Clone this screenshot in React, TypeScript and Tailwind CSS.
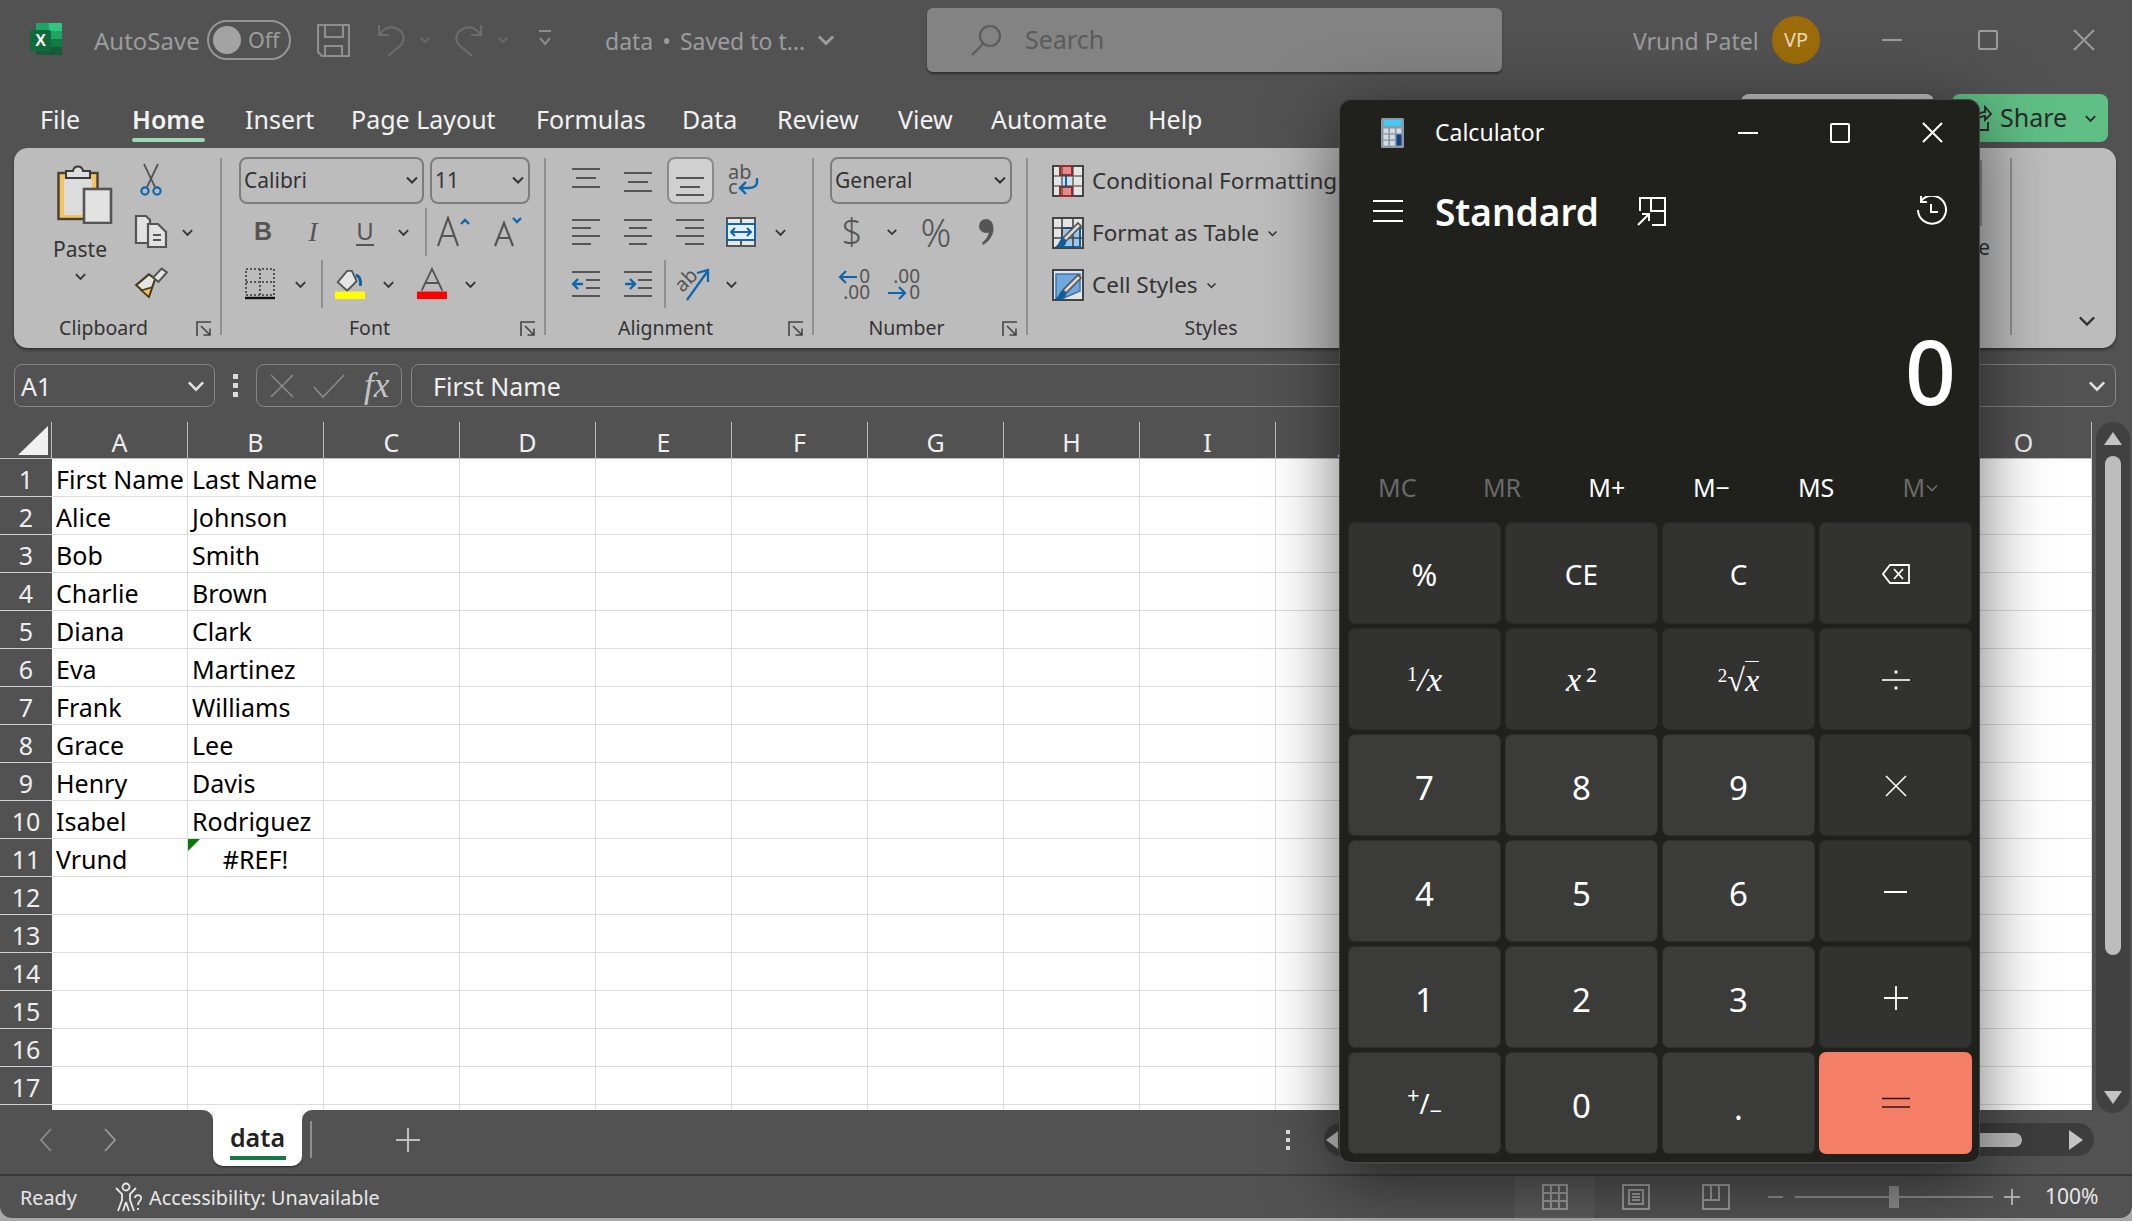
import React from "react";

const Chev = ({ s = 14, c = "#333", w = 2 }: { s?: number; c?: string; w?: number }) => (
  <svg width={s} height={s} viewBox="0 0 14 14" fill="none" stroke={c} strokeWidth={w}>
    <path d="M2 4.5 L7 9.5 L12 4.5" />
  </svg>
);

const Cell = ({ w, children, className = "" }: { w: number; children?: React.ReactNode; className?: string }) => (
  <div className={"flex items-center justify-center shrink-0 h-full " + className} style={{ width: w }}>
    {children}
  </div>
);

const VBar = ({ h = 48 }: { h?: number }) => <div className="w-[2px] bg-[#8f8f8f] shrink-0" style={{ height: h }} />;

const Launcher = () => (
  <svg width="16" height="16" viewBox="0 0 16 16" fill="none" stroke="#444" strokeWidth="1.6">
    <path d="M15 1H1V15" />
    <path d="M5 5L14 14M14 7.5V14H7.5" />
  </svg>
);

const Lines = ({ rows, w = 28, h = 20, c = "#555" }: { rows: number[][]; w?: number; h?: number; c?: string }) => (
  <svg width={w} height={h} viewBox={`0 0 ${w} ${h}`} stroke={c} strokeWidth="2.2">
    {rows.map((r, i) => (
      <line key={i} x1={r[0]} x2={r[1]} y1={r[2]} y2={r[2]} />
    ))}
  </svg>
);

const Select = ({ text, w }: { text: string; w: number }) => (
  <div
    className="h-[47px] rounded-[8px] border-2 border-[#7d7d7d] flex items-center justify-between pl-[3px] pr-[3px] text-[21px] text-[#333] shrink-0"
    style={{ width: w }}
  >
    <span className="pt-[2px]">{text}</span>
    <Chev s={14} c="#333" />
  </div>
);

const Group = ({
  w,
  label,
  launcher,
  children,
}: {
  w: number;
  label: string;
  launcher?: boolean;
  children: React.ReactNode;
}) => (
  <div className="shrink-0 flex flex-col h-full" style={{ width: w }}>
    <div className="h-[166px] pt-[6px] overflow-hidden">{children}</div>
    <div className={"h-[28px] flex items-center relative " + (launcher ? "pr-[27px]" : "")}>
      <div className="w-full text-center text-[19.5px] text-[#333] leading-none">{label}</div>
      {launcher && (
        <div className="absolute right-[8px] top-[7px]">
          <Launcher />
        </div>
      )}
    </div>
  </div>
);

const Row = ({ children, pl = 0 }: { children: React.ReactNode; pl?: number }) => (
  <div className="h-[52px] flex items-center" style={{ paddingLeft: pl }}>
    {children}
  </div>
);

const Divider = () => <div className="w-[2px] h-[177px] mt-[10px] bg-[#8f8f8f] shrink-0" />;

const PasteIcon = () => (
  <svg width="56" height="60" viewBox="0 0 56 60">
    <rect x="1.5" y="9" width="39" height="46" fill="#f2c468" stroke="#4a3f2a" strokeWidth="2.4" />
    <rect x="7" y="15" width="28" height="36" fill="#dcdcdc" />
    <path d="M9 14V7H16C17 1 25 1 26 7H33V14Z" fill="#dedede" stroke="#3a3a3a" strokeWidth="2" />
    <rect x="27" y="25" width="27" height="34" fill="#e2e2e2" stroke="#555" strokeWidth="2.6" />
  </svg>
);
const CutIcon = () => (
  <svg width="22" height="34" viewBox="0 0 22 34" fill="none">
    <path d="M4 1L15 24M18 1L7 24" stroke="#555" strokeWidth="1.8" />
    <circle cx="5" cy="28" r="3.6" stroke="#0f66ad" strokeWidth="2.2" />
    <circle cx="17" cy="28" r="3.6" stroke="#0f66ad" strokeWidth="2.2" />
  </svg>
);
const CopyIcon = () => (
  <svg width="34" height="34" viewBox="0 0 34 34" fill="#e2e2e2" stroke="#555" strokeWidth="2.2">
    <path d="M2 1H12L16 5V28H2Z" />
    <path d="M14 9H24L32 17V32H14Z" />
    <path d="M19 20H27M19 25H27" />
  </svg>
);
const PainterIcon = () => (
  <svg width="34" height="34" viewBox="0 0 32 32">
    <path d="M2 17L14 28L20 11L14 7Z" fill="#e5e5e5" stroke="#4a3a1a" strokeWidth="2" />
    <path d="M7 22L14 28L17 19Z" fill="#f0c060" stroke="#4a3a1a" strokeWidth="1.5" />
    <path d="M18 10L26 1.5L31 5L23 14Z" fill="#e5e5e5" stroke="#555" strokeWidth="2" />
  </svg>
);
const BorderIcon = () => (
  <svg width="30" height="32" viewBox="0 0 30 32" fill="none" stroke="#555" strokeWidth="2" strokeDasharray="2 2">
    <rect x="1" y="1" width="28" height="26" />
    <path d="M15 1V27M1 14H29" />
    <path d="M0 30H30" stroke="#111" strokeDasharray="none" strokeWidth="2.4" />
  </svg>
);
const FillIcon = () => (
  <svg width="34" height="34" viewBox="0 0 34 34">
    <path d="M4 15L14 3L19 3L24 14L14 24Z" fill="#e5e5e5" stroke="#555" strokeWidth="2" />
    <path d="M23 8C27 8 29 13 28 19" fill="none" stroke="#0f5f9f" strokeWidth="3" />
    <rect x="1" y="25" width="32" height="8" fill="#ffff00" />
  </svg>
);
const ColorA = () => (
  <svg width="34" height="34" viewBox="0 0 34 34">
    <path d="M6 24L17 1L28 24M10 16H24" fill="none" stroke="#555" strokeWidth="2" />
    <rect x="1" y="25" width="32" height="8" fill="#ff0000" />
  </svg>
);
const FontUp = ({ d }: { d: boolean }) => (
  <svg width={d ? 30 : 34} height="32" viewBox={d ? "0 0 30 32" : "0 0 34 32"} fill="none">
    {d ? (
      <>
        <path d="M2 30L11 7L20 30M6 22H16" stroke="#555" strokeWidth="2.2" />
        <path d="M20 2L24 6L28 2" stroke="#0f66ad" strokeWidth="2.4" />
      </>
    ) : (
      <>
        <path d="M2 30L12 2L22 30M6 20H18" stroke="#555" strokeWidth="2.2" />
        <path d="M25 8L29 4L33 8" stroke="#0f66ad" strokeWidth="2.4" />
      </>
    )}
  </svg>
);
const WrapIcon = () => (
  <div className="relative w-[32px] h-[32px] text-[#555] text-[20px] leading-[15px]">
    <div>ab</div>
    <div>c</div>
    <svg className="absolute left-[10px] top-[14px]" width="22" height="18" viewBox="0 0 22 18" fill="none" stroke="#0f66ad" strokeWidth="2.4">
      <path d="M19 0V4C19 8 15 10 11 10H3M8 4L2 10L8 16" />
    </svg>
  </div>
);
const MergeIcon = () => (
  <svg width="30" height="30" viewBox="0 0 30 30" fill="none">
    <rect x="1" y="1" width="28" height="28" fill="#e7e7e7" stroke="#555" strokeWidth="2" />
    <path d="M15 1V7M15 23V29" stroke="#555" strokeWidth="2" />
    <rect x="1" y="7" width="28" height="16" fill="#e7f0f8" stroke="#0f66ad" strokeWidth="2" />
    <path d="M5 15H25M9 11L5 15L9 19M21 11L25 15L21 19" stroke="#0f66ad" strokeWidth="2" />
  </svg>
);
const IndentIcon = ({ dir }: { dir: number }) => (
  <svg width="28" height="28" viewBox="0 0 28 28" fill="none">
    <path d="M0 2H28M0 26H28M14 10H28M14 18H28" stroke="#555" strokeWidth="2.2" />
    {dir < 0 ? (
      <path d="M1 14H11M6 9L1 14L6 19" stroke="#0f66ad" strokeWidth="2.4" />
    ) : (
      <path d="M1 14H10M6 9L11 14L6 19" stroke="#0f66ad" strokeWidth="2.4" />
    )}
  </svg>
);
const OrientIcon = () => (
  <div className="relative w-[34px] h-[34px]">
    <span className="absolute left-[-2px] top-[3px] text-[20px] leading-none text-[#555] -rotate-45">ab</span>
    <svg className="absolute inset-0" width="34" height="34" viewBox="0 0 34 34" fill="none" stroke="#0f66ad" strokeWidth="2.2">
      <path d="M11 33L31 5M21 6L32 3L32 15" />
    </svg>
  </div>
);
const Decimal = ({ inc }: { inc: boolean }) => (
  <div className="relative w-[32px] h-[32px] text-[#555] text-[19px] leading-[16px] text-right">
    <div>{inc ? ".00" : "0"}</div>
    <div>{inc ? "0" : ".00"}</div>
    <svg
      className={"absolute left-0 " + (inc ? "top-[17px]" : "top-[1px]")}
      width="20"
      height="16"
      viewBox="0 0 20 16"
      fill="none"
      stroke="#0f66ad"
      strokeWidth="2.2"
    >
      {inc ? <path d="M0 8H17M11 2L17 8L11 14" /> : <path d="M19 8H2M8 2L2 8L8 14" />}
    </svg>
  </div>
);
const StyleIcon = ({ kind }: { kind: number }) => (
  <svg width="32" height="32" viewBox="0 0 32 32" className="shrink-0">
    <rect x="1" y="1" width="30" height="30" fill="#e5e5e5" stroke="#444" strokeWidth="2" />
    {kind === 0 && (
      <>
        <rect x="8" y="1" width="12" height="9" fill="#e88a8a" stroke="#9c2b2b" strokeWidth="2" />
        <rect x="8" y="22" width="12" height="9" fill="#e88a8a" stroke="#9c2b2b" strokeWidth="2" />
        <rect x="8" y="11" width="12" height="10" fill="#cfe3f5" />
        <path d="M14 10V22" stroke="#0f66ad" strokeWidth="2" />
      </>
    )}
    {kind === 1 && <rect x="10" y="11" width="18" height="19" fill="#9cc7ea" stroke="#0f5f9f" strokeWidth="2" />}
    {kind === 2 && <path d="M4 5H28V22L12 29H4Z" fill="#6fa8dc" stroke="#3f74b5" strokeWidth="1.5" />}
    {kind < 2 && <path d="M1 11H31M1 21H31M10 1V31M21 1V31" stroke="#444" strokeWidth="1.6" fill="none" opacity={kind === 0 ? 0.75 : 1} />}
    {kind > 0 && (
      <>
        <path d="M29 9L14 24L11 21L26 6Z" fill="#d8d8d8" stroke="#555" strokeWidth="1.6" />
        <path d="M11 21C7 22 8 27 3 30C9 32 15 29 14 24Z" fill="#0f5f9f" />
      </>
    )}
  </svg>
);

const Ribbon = () => (
  <div className="ml-[14px] mr-[16px] h-[200px] rounded-[14px] bg-[#bcbcbc] flex relative text-[#333] shadow-[0_2px_3px_rgba(0,0,0,0.4)] overflow-hidden">
    <Group w={206} label="Clipboard" launcher>
      <div className="flex h-full">
        <div className="w-[120px] flex flex-col items-center pl-[12px] pt-[10px]">
          <div className="ml-[9px]">
            <PasteIcon />
          </div>
          <div className="text-[21px] leading-[28px] mt-[11px]">Paste</div>
          <div className="mt-[7px]">
            <Chev s={13} />
          </div>
        </div>
        <div>
          <Row>
            <Cell w={34}>
              <CutIcon />
            </Cell>
          </Row>
          <Row>
            <Cell w={34}>
              <CopyIcon />
            </Cell>
            <Cell w={38}>
              <Chev s={13} />
            </Cell>
          </Row>
          <Row>
            <Cell w={34}>
              <PainterIcon />
            </Cell>
          </Row>
        </div>
      </div>
    </Group>
    <Divider />
    <Group w={322} label="Font" launcher>
      <Row pl={17}>
        <Select text="Calibri" w={185} />
        <div className="w-[6px]" />
        <Select text="11" w={100} />
      </Row>
      <Row pl={17}>
        <Cell w={48}>
          <span className="font-['Liberation_Sans',sans-serif] font-bold text-[25px] text-[#555]">B</span>
        </Cell>
        <Cell w={52}>
          <span className="font-['Liberation_Serif',serif] italic text-[27px] text-[#555]">I</span>
        </Cell>
        <Cell w={52}>
          <span className="text-[24px] leading-[26px] text-[#555] border-b-2 border-[#555]">U</span>
        </Cell>
        <Cell w={24}>
          <Chev s={13} />
        </Cell>
        <Cell w={10} />
        <div className="h-full flex items-center">
          <VBar h={48} />
        </div>
        <Cell w={52}>
          <FontUp d={false} />
        </Cell>
        <Cell w={58}>
          <FontUp d />
        </Cell>
      </Row>
      <Row pl={21}>
        <Cell w={34}>
          <BorderIcon />
        </Cell>
        <Cell w={40} className="pl-[6px]">
          <Chev s={13} />
        </Cell>
        <Cell w={4} />
        <VBar h={48} />
        <Cell w={11} />
        <Cell w={32}>
          <FillIcon />
        </Cell>
        <Cell w={44}>
          <Chev s={13} />
        </Cell>
        <Cell w={6} />
        <Cell w={32}>
          <ColorA />
        </Cell>
        <Cell w={44}>
          <Chev s={13} />
        </Cell>
      </Row>
    </Group>
    <Divider />
    <Group w={266} label="Alignment" launcher>
      <Row pl={14}>
        <Cell w={52} className="pb-[4px]">
          <Lines rows={[[0, 28, 1], [4, 24, 10], [0, 28, 19]]} />
        </Cell>
        <Cell w={52} className="pt-[4px]">
          <Lines rows={[[0, 28, 1], [4, 24, 10], [0, 28, 19]]} />
        </Cell>
        <Cell w={52}>
          <div className="w-[47px] h-[47px] rounded-[8px] border-2 border-[#8a8a8a] bg-[#d0d0d0] flex items-end justify-center pb-[5px]">
            <Lines rows={[[0, 28, 1], [4, 24, 10], [0, 28, 18]]} />
          </div>
        </Cell>
        <Cell w={56}>
          <WrapIcon />
        </Cell>
      </Row>
      <Row pl={14}>
        <Cell w={52}>
          <Lines h={28} rows={[[0, 28, 2], [0, 19, 10], [0, 28, 18], [0, 19, 26]]} />
        </Cell>
        <Cell w={52}>
          <Lines h={28} rows={[[0, 28, 2], [5, 23, 10], [0, 28, 18], [5, 23, 26]]} />
        </Cell>
        <Cell w={52}>
          <Lines h={28} rows={[[0, 28, 2], [9, 28, 10], [0, 28, 18], [9, 28, 26]]} />
        </Cell>
        <Cell w={50}>
          <MergeIcon />
        </Cell>
        <Cell w={28}>
          <Chev s={13} />
        </Cell>
      </Row>
      <Row pl={14}>
        <Cell w={52}>
          <IndentIcon dir={-1} />
        </Cell>
        <Cell w={52}>
          <IndentIcon dir={1} />
        </Cell>
        <VBar h={48} />
        <Cell w={54}>
          <OrientIcon />
        </Cell>
        <Cell w={22}>
          <Chev s={13} />
        </Cell>
      </Row>
    </Group>
    <Divider />
    <Group w={212} label="Number" launcher>
      <Row pl={16}>
        <Select text="General" w={182} />
      </Row>
      <Row pl={18}>
        <Cell w={40}>
          <span className="text-[36px] leading-none text-[#555] font-light">$</span>
        </Cell>
        <Cell w={40}>
          <Chev s={12} />
        </Cell>
        <Cell w={48}>
          <span className="text-[38px] leading-none text-[#555] font-light">%</span>
        </Cell>
        <Cell w={54}>
          <svg width="16" height="28" viewBox="0 0 16 28" fill="#555">
            <circle cx="7" cy="8" r="7" />
            <path d="M9 2C17 5 17 19 4 27L3 25C9 20 11 14 9 11Z" />
          </svg>
        </Cell>
      </Row>
      <Row pl={20}>
        <Cell w={40}>
          <Decimal inc={false} />
        </Cell>
        <Cell w={10} />
        <Cell w={40}>
          <Decimal inc />
        </Cell>
      </Row>
    </Group>
    <Divider />
    <Group w={366} label="Styles">
      <div className="pl-[24px] pt-[1px] text-[22.5px] whitespace-nowrap">
        <Row>
          <StyleIcon kind={0} />
          <span className="ml-[8px]">Conditional Formatting</span>
        </Row>
        <Row>
          <StyleIcon kind={1} />
          <span className="ml-[8px]">Format as Table</span>
          <span className="ml-[8px]">
            <Chev s={11} />
          </span>
        </Row>
        <Row>
          <StyleIcon kind={2} />
          <span className="ml-[8px]">Cell Styles</span>
          <span className="ml-[8px]">
            <Chev s={11} />
          </span>
        </Row>
      </div>
    </Group>
    <div className="w-[616px] shrink-0 flex flex-col items-end pr-[20px] pt-[12px]">
      <div className="w-[2px] h-[66px] bg-[#888888] mr-[8px]" />
      <div className="mt-[11px] text-[21px] text-[#333] leading-none">e</div>
    </div>
    <Divider />
    <div className="flex-1 flex items-end justify-end pb-[17px] pr-[19px]">
      <Chev s={20} c="#333" w={1.6} />
    </div>
  </div>
);

const TitleBar = () => (
  <div className="h-[80px] flex items-center shrink-0 text-[#9c9c9c]">
    <div className="ml-[30px] w-[32px] h-[32px] mb-[2px]">
      <svg width="32" height="32" viewBox="0 0 32 32">
        <rect x="6" y="0" width="26" height="32" rx="1.5" fill="#21a366" />
        <rect x="19" y="0" width="13" height="8" fill="#33c481" />
        <rect x="6" y="0" width="13" height="8" fill="#21a366" />
        <rect x="19" y="16" width="13" height="8" fill="#107c41" />
        <rect x="6" y="16" width="13" height="8" fill="#107c41" />
        <rect x="6" y="24" width="26" height="8" fill="#185c37" />
        <rect x="0" y="7" width="21" height="21" rx="1.5" fill="#0f6b3b" />
        <text x="10.5" y="23" textAnchor="middle" fontSize="16" fontWeight="700" fill="#fff" fontFamily="Liberation Sans">X</text>
      </svg>
    </div>
    <div className="ml-[32px] w-[106px] text-[24px] pt-[2px]">AutoSave</div>
    <div className="ml-[7px] w-[84px] h-[40px] rounded-full border-2 border-[#959595] flex items-center pl-[4px] gap-[7px] text-[21.5px]">
      <div className="w-[28px] h-[28px] rounded-full bg-[#a3a3a3]" />
      <span>Off</span>
    </div>
    <div className="ml-[26px] w-[33px] h-[33px]">
      <svg width="33" height="33" viewBox="0 0 33 33" fill="none" stroke="#8e8e8e" strokeWidth="2.2">
        <path d="M1 1H32V32H5L1 28Z" />
        <path d="M8 1V13H26V1M8 32V22H25V32" />
      </svg>
    </div>
    <div className="ml-[27px] w-[28px]">
      <svg width="29" height="34" viewBox="0 0 29 34" fill="none" stroke="#6c6c6c" strokeWidth="2.2">
        <path d="M2 2V12H12M2 12C6 6 12 3 18 5C27 8 29 16 24 22L11 33" />
      </svg>
    </div>
    <div className="ml-[14px]">
      <Chev s={12} c="#6c6c6c" />
    </div>
    <div className="ml-[23px] w-[28px]">
      <svg width="29" height="34" viewBox="0 0 29 34" fill="none" stroke="#6c6c6c" strokeWidth="2.2">
        <path d="M27 2V12H17M27 12C23 6 17 3 11 5C2 8 0 16 5 22L18 33" />
      </svg>
    </div>
    <div className="ml-[15px]">
      <Chev s={12} c="#6c6c6c" />
    </div>
    <div className="ml-[29px]">
      <svg width="14" height="22" viewBox="0 0 14 22" fill="none" stroke="#8c8c8c" strokeWidth="2">
        <path d="M1 2H13M2 9L7 15L12 9" />
      </svg>
    </div>
    <div className="ml-[53px] w-[199px] text-[23px] whitespace-nowrap flex pt-[2px]">
      <span>data</span>
      <span className="mx-[9px]">•</span>
      <span>Saved to t...</span>
    </div>
    <div className="ml-[12px]">
      <Chev s={20} c="#9c9c9c" />
    </div>
    <div className="ml-[91px] w-[575px] h-[64px] rounded-[6px] bg-[#838383] shadow-[0_2px_2px_rgba(0,0,0,0.4)] flex items-center pl-[43px]">
      <svg width="32" height="32" viewBox="0 0 32 32" fill="none" stroke="#5c5c5c" strokeWidth="2.2">
        <circle cx="20" cy="12" r="10" />
        <path d="M13 20L2 31" />
      </svg>
      <span className="ml-[23px] text-[25px] text-[#5b5b5b]">Search</span>
    </div>
    <div className="ml-[131px] w-[125px] text-[23px] whitespace-nowrap pt-[2px]">Vrund Patel</div>
    <div className="ml-[14px] w-[48px] h-[48px] rounded-full bg-[#9c6c0a] flex items-center justify-center text-[20px] text-[#e8d9b8]">VP</div>
    <div className="ml-[62px] w-[20px] h-[2px] bg-[#9c9c9c]" />
    <div className="ml-[76px] w-[20px] h-[20px] border-2 border-[#9c9c9c] rounded-[2px]" />
    <svg className="ml-[75px]" width="22" height="22" viewBox="0 0 22 22" stroke="#9c9c9c" strokeWidth="2">
      <path d="M1 1L21 21M21 1L1 21" />
    </svg>
  </div>
);

const tabs: [string, number][] = [
  ["File", 92],
  ["Home", 113],
  ["Insert", 106],
  ["Page Layout", 185],
  ["Formulas", 146],
  ["Data", 95],
  ["Review", 121],
  ["View", 93],
  ["Automate", 157],
  ["Help", 70],
];

const TabRow = () => (
  <div className="h-[68px] flex pl-[40px] shrink-0 text-[#f2f2f2] text-[25px]">
    {tabs.map(([t, w]) => (
      <div key={t} className="pt-[20px] shrink-0" style={{ width: w }}>
        <div className="inline-flex flex-col items-stretch">
          <span className={"leading-[38px] whitespace-nowrap " + (t === "Home" ? "font-semibold" : "")}>{t}</span>
          {t === "Home" && <span className="h-[4px] rounded-full bg-[#9fd6b6]" />}
        </div>
      </div>
    ))}
    <div className="ml-[523px] mt-[14px] w-[193px] h-[54px] rounded-t-[8px] bg-[#bdbdbd]" />
    <div className="ml-[18px] mt-[14px] w-[156px] h-[48px] rounded-[8px] bg-[#5fbf84] flex items-center pl-[16px] text-[#2a2a2a]">
      <svg width="24" height="28" viewBox="0 0 24 28" fill="none" stroke="#2a2a2a" strokeWidth="1.8">
        <path d="M2 10V26H20V18M8 18C8 11 12 8 17 8V3L23 10L17 16V12C13 12 10 14 8 18Z" />
      </svg>
      <span className="ml-[8px] w-[84px] text-[25px]">Share</span>
      <Chev s={13} c="#2a2a2a" />
    </div>
  </div>
);

const FormulaBar = () => (
  <div className="mt-[16px] h-[43px] flex pl-[14px] shrink-0 text-[#f0f0f0]">
    <div className="w-[201px] rounded-[8px] border border-[#858585] flex items-center justify-between pl-[6px] pr-[8px] text-[25px]">
      <span className="pt-[2px]">A1</span>
      <Chev s={20} c="#e0e0e0" w={1.8} />
    </div>
    <div className="w-[41px] flex flex-col items-center justify-center gap-[4px]">
      <span className="w-[5px] h-[5px] bg-[#dcdcdc]" />
      <span className="w-[5px] h-[5px] bg-[#dcdcdc]" />
      <span className="w-[5px] h-[5px] bg-[#dcdcdc]" />
    </div>
    <div className="w-[146px] rounded-[8px] border border-[#858585] flex items-center pl-[12px]">
      <svg width="26" height="26" viewBox="0 0 26 26" stroke="#8a8a8a" strokeWidth="1.6" fill="none">
        <path d="M2 2L24 24M24 2L2 24" />
      </svg>
      <svg className="ml-[17px]" width="34" height="26" viewBox="0 0 34 26" stroke="#8a8a8a" strokeWidth="1.6" fill="none">
        <path d="M2 14L11 24L32 2" />
      </svg>
      <span className="ml-[18px] font-['Liberation_Serif',serif] italic text-[35px] leading-none text-[#c4c4c4]">fx</span>
    </div>
    <div className="ml-[9px] w-[1705px] rounded-[8px] border border-[#858585] flex items-center justify-between pl-[21px] pr-[8px] text-[25px]">
      <span className="pt-[2px]">First Name</span>
      <Chev s={20} c="#e0e0e0" w={1.8} />
    </div>
  </div>
);

const cols = "ABCDEFGHIJKLMNO".split("");
const data: [string, string][] = [
  ["First Name", "Last Name"],
  ["Alice", "Johnson"],
  ["Bob", "Smith"],
  ["Charlie", "Brown"],
  ["Diana", "Clark"],
  ["Eva", "Martinez"],
  ["Frank", "Williams"],
  ["Grace", "Lee"],
  ["Henry", "Davis"],
  ["Isabel", "Rodriguez"],
  ["Vrund", "#REF!"],
];
const rowNums = Array.from({ length: 18 }, (_, i) => i + 1);

const Sheet = () => (
  <div className="mt-[15px] h-[688px] flex shrink-0">
    <div className="w-[2092px] h-[688px] overflow-hidden">
      <div className="flex h-[37px] text-[#eeeeee] text-[25px]">
        <div className="w-[52px] border-r border-[#bdbdbd] flex items-end justify-end pr-[3px] pb-[4px]">
          <svg width="30" height="29" viewBox="0 0 30 29">
            <path d="M30 0V29H0Z" fill="#f0f0f0" />
          </svg>
        </div>
        {cols.map((c) => (
          <div key={c} className="w-[136px] border-r border-[#bdbdbd] flex items-center justify-center pt-[4px]">
            {c}
          </div>
        ))}
      </div>
      <div className="h-[1px] bg-[#bdbdbd] -mt-[1px] relative" />
      {rowNums.map((n) => {
        const d = data[n - 1];
        return (
          <div key={n} className="flex h-[38px] text-[25px] leading-[39px]">
            <div className="w-[52px] border-b border-[#cfcfcf] text-center text-[#eeeeee] pt-[1px]">{n < 18 ? n : ""}</div>
            {cols.map((c, i) => (
              <div
                key={c}
                className="w-[136px] bg-white border-r border-b border-[#dcdcdc] text-black pl-[4px] relative whitespace-nowrap pt-[1px]"
              >
                {d && i === 0 && d[0]}
                {d && i === 1 && d[1] !== "#REF!" && d[1]}
                {d && i === 1 && d[1] === "#REF!" && (
                  <>
                    <span className="absolute left-0 top-0 w-0 h-0 border-t-[12px] border-t-[#0a7a0a] border-r-[12px] border-r-transparent" />
                    <div className="text-center -ml-[4px]">{d[1]}</div>
                  </>
                )}
              </div>
            ))}
          </div>
        );
      })}
    </div>
    <div className="ml-[4px] w-[34px] h-[691px] rounded-full bg-[#414141] relative z-10 flex flex-col items-center pt-[10px] pb-[9px]">
      <svg width="18" height="13" viewBox="0 0 18 13">
        <path d="M9 0L18 13H0Z" fill="#c4c4c4" />
      </svg>
      <div className="mt-[11px] w-[16px] h-[499px] rounded-full bg-[#bdbdbd]" />
      <div className="flex-1" />
      <svg width="18" height="13" viewBox="0 0 18 13">
        <path d="M9 13L18 0H0Z" fill="#c4c4c4" />
      </svg>
    </div>
  </div>
);

const TabBar = () => (
  <div className="h-[66px] flex bg-white shrink-0 border-b-2 border-[#3b3b3b]">
    <div className="w-[213px] bg-[#525252] rounded-tr-[10px] flex items-center pl-[40px] gap-[52px] pb-[5px]">
      <svg width="12" height="24" viewBox="0 0 12 24" fill="none" stroke="#8c8c8c" strokeWidth="1.8">
        <path d="M11 1L1 12L11 23" />
      </svg>
      <svg width="12" height="24" viewBox="0 0 12 24" fill="none" stroke="#9a9a9a" strokeWidth="1.8">
        <path d="M1 1L11 12L1 23" />
      </svg>
    </div>
    <div className="w-[89px] bg-[#525252]">
      <div className="w-[89px] h-[56px] bg-white rounded-b-[10px] flex flex-col items-center shadow-[0_1px_2px_rgba(0,0,0,0.5)] pt-[10px]">
        <span className="text-[25px] leading-[34px] font-semibold text-[#222]">data</span>
        <span className="w-[56px] h-[4px] bg-[#107c41] mt-[2px] shrink-0" />
      </div>
    </div>
    <div className="flex-1 bg-[#525252] rounded-tl-[10px] flex items-center pb-[5px]">
      <div className="w-[2px] h-[37px] bg-[#8f8f8f] ml-[8px]" />
      <svg className="ml-[84px]" width="24" height="24" viewBox="0 0 24 24" stroke="#c0c0c0" strokeWidth="2">
        <path d="M12 0V24M0 12H24" />
      </svg>
      <div className="ml-[866px] flex flex-col gap-[4px]">
        <span className="w-[4px] h-[4px] bg-[#dcdcdc]" />
        <span className="w-[4px] h-[4px] bg-[#dcdcdc]" />
        <span className="w-[4px] h-[4px] bg-[#dcdcdc]" />
      </div>
      <div className="ml-[34px] w-[770px] h-[33px] rounded-full bg-[#3d3d3d] flex items-center pl-[2px] pr-[11px] justify-between">
        <svg width="12" height="18" viewBox="0 0 12 18">
          <path d="M0 9L12 0V18Z" fill="#bdbdbd" />
        </svg>
        <div className="ml-auto mr-[47px] w-[60px] h-[14px] rounded-full bg-[#bcbcbc]" />
        <svg width="14" height="20" viewBox="0 0 14 20">
          <path d="M14 10L0 0V20Z" fill="#c4c4c4" />
        </svg>
      </div>
    </div>
  </div>
);

const StatusBar = () => (
  <div className="h-[42px] flex items-center text-[19.8px] text-[#e8e8e8] shrink-0">
    <span className="ml-[20px] w-[95px] pt-[1px]">Ready</span>
    <svg width="28" height="30" viewBox="0 0 28 30" fill="none" stroke="#e8e8e8" strokeWidth="1.8">
      <circle cx="11" cy="5" r="3.5" />
      <path d="M1 6L7 12V18L3 29M21 6L15 12V18L19 29M11 20L8 29M11 20L14 29" />
      <path d="M20 16C20 12 27 12 26 17C25 20 23 19 23 23M23 26V28" />
    </svg>
    <span className="ml-[6px] w-[400px] pt-[1px]">Accessibility: Unavailable</span>
    <div className="ml-[966px] w-[80px] h-full bg-[#ffffff0d] flex items-center justify-center">
      <svg width="26" height="26" viewBox="0 0 26 26" fill="none" stroke="#9a9a9a" strokeWidth="2">
        <path d="M1 1H25V25H1ZM1 9H25M1 17H25M9 1V25M17 1V25" />
      </svg>
    </div>
    <svg className="ml-[27px]" width="28" height="26" viewBox="0 0 28 26" fill="none" stroke="#9a9a9a" strokeWidth="2">
      <path d="M1 1H27V25H1Z" />
      <path d="M7 6H21V20H7ZM10 10H18M10 13H18M10 16H18" />
    </svg>
    <svg className="ml-[52px]" width="28" height="26" viewBox="0 0 28 26" fill="none" stroke="#9a9a9a" strokeWidth="2">
      <path d="M1 1H27V25H1ZM1 16H17V1M9 1V16" />
    </svg>
    <div className="ml-[38px] w-[15px] h-[2px] bg-[#8c8c8c]" />
    <div className="ml-[12px] w-[198px] h-[2px] bg-[#8c8c8c] relative">
      <div className="absolute left-[94px] -top-[10px] w-[10px] h-[22px] bg-[#8c8c8c]" />
    </div>
    <svg className="ml-[11px]" width="16" height="16" viewBox="0 0 16 16" stroke="#c8c8c8" strokeWidth="1.6">
      <path d="M8 0V16M0 8H16" />
    </svg>
    <span className="ml-[25px] text-[21px]">100%</span>
  </div>
);

const Btn = ({
  children,
  digit,
  eq,
  className = "",
}: {
  children: React.ReactNode;
  digit?: boolean;
  eq?: boolean;
  className?: string;
}) => (
  <div
    className={
      "h-[102px] rounded-[7px] flex items-center justify-center text-white " +
      (eq
        ? "bg-[#f47f66]"
        : digit
          ? "bg-[#3b3b39] border border-[#2e2e2c] text-[33px] pt-[6px]"
          : "bg-[#323230] border border-[#2a2a28] text-[28px] pt-[2px]") +
      " " +
      className
    }
  >
    {children}
  </div>
);

const serif = "font-['Liberation_Serif',serif]";

const Calculator = () => (
  <div className="absolute left-[1339px] top-[99px] w-[641px] h-[1065px] rounded-[12px] bg-[#20201c] border border-[#454545] border-b-2 shadow-[0_16px_70px_rgba(0,0,0,0.55)] flex flex-col text-white">
    <div className="h-[65px] flex items-center shrink-0">
      <svg className="ml-[41px]" width="23" height="30" viewBox="0 0 23 30">
        <rect width="23" height="30" rx="1.5" fill="#8d99a5" />
        <rect x="2.5" y="2" width="18" height="6" fill="#45c8f2" />
        {[0, 1, 2].map((r) =>
          [0, 1, 2].map((c) =>
            r > 0 && c === 2 ? null : (
              <rect key={r + "-" + c} x={2.5 + c * 6.5} y={10.5 + r * 6.2} width="4.8" height="4.8" fill="#d5dbe0" />
            ),
          ),
        )}
        <rect x="15.5" y="16.5" width="5" height="11" fill="#123f86" />
      </svg>
      <span className="ml-[31px] text-[23px] w-[303px]">Calculator</span>
      <div className="w-[20px] h-[2px] bg-white" />
      <div className="ml-[72px] w-[20px] h-[20px] border-2 border-white rounded-[2px]" />
      <svg className="ml-[72px]" width="21" height="21" viewBox="0 0 21 21" stroke="#fff" strokeWidth="2">
        <path d="M1 1L20 20M20 1L1 20" />
      </svg>
    </div>
    <div className="h-[92px] flex items-center shrink-0">
      <svg className="ml-[33px]" width="30" height="22" viewBox="0 0 30 22" stroke="#fff" strokeWidth="2">
        <path d="M0 1H30M0 11H30M0 21H30" />
      </svg>
      <span className="ml-[32px] text-[37px] font-semibold w-[202px] leading-none">Standard</span>
      <svg width="29" height="29" viewBox="0 0 29 29" fill="none" stroke="#fff" strokeWidth="2">
        <path d="M3 14V1H28V28H15M14 1V14H28M1 28L12 17M5 17H12V24" />
      </svg>
      <svg className="ml-[250px] mt-[2px]" width="31" height="32" viewBox="0 0 31 32" fill="none" stroke="#fff" strokeWidth="2">
        <path d="M5 5A14 14 0 1 1 2 14M5 0V6H11M15 8V16H22" />
      </svg>
    </div>
    <div className="flex-1 flex items-start justify-end pr-[23px]">
      <span className="text-[89px] font-medium leading-none mt-[69px]">0</span>
    </div>
    <div className="h-[68px] flex items-center shrink-0 px-[5px] text-[25px] text-white">
      {[
        ["MC", "text-[#6a6a68]"],
        ["MR", "text-[#6a6a68]"],
        ["M+", ""],
        ["M−", ""],
        ["MS", ""],
      ].map(([t, c]) => (
        <div key={t} className={"w-[104.7px] text-center " + c}>
          {t}
        </div>
      ))}
      <div className="w-[104.7px] flex items-center justify-center text-[#6a6a68]">
        M
        <Chev s={14} c="#6a6a68" w={1.6} />
      </div>
    </div>
    <div className="pl-[8px] pr-[7px] grid grid-cols-4 gap-x-[4px] gap-y-[4px] shrink-0 pb-[8px]">
      <Btn className="text-[31px]">%</Btn>
      <Btn>CE</Btn>
      <Btn>C</Btn>
      <Btn>
        <svg width="28" height="20" viewBox="0 0 28 20" fill="none" stroke="#fff" strokeWidth="1.8">
          <path d="M8 1H27V19H8L1 10ZM12 5L21 15M21 5L12 15" />
        </svg>
      </Btn>
      <Btn>
        <span className={serif + " italic text-[34px] leading-none"}>
          <sup className="text-[21px] not-italic">1</sup>/x
        </span>
      </Btn>
      <Btn>
        <span className={serif + " italic text-[34px] leading-none"}>
          x<sup className="ml-[5px] text-[19px] not-italic font-['Noto_Sans',sans-serif]">2</sup>
        </span>
      </Btn>
      <Btn>
        <span className={serif + " italic text-[32px] leading-none"}>
          <sup className="text-[19px] not-italic">2</sup>
          <span className="not-italic">√</span>
          <span className="border-t border-white">x</span>
        </span>
      </Btn>
      <Btn>
        <svg width="28" height="24" viewBox="0 0 28 24" fill="#fff">
          <rect x="0" y="11.2" width="28" height="1.6" />
          <circle cx="14" cy="4" r="1.7" />
          <circle cx="14" cy="20" r="1.7" />
        </svg>
      </Btn>
      {["7", "8", "9"].map((d) => (
        <Btn key={d} digit>
          {d}
        </Btn>
      ))}
      <Btn>
        <svg width="22" height="22" viewBox="0 0 22 22" stroke="#fff" strokeWidth="1.6">
          <path d="M1 1L21 21M21 1L1 21" />
        </svg>
      </Btn>
      {["4", "5", "6"].map((d) => (
        <Btn key={d} digit>
          {d}
        </Btn>
      ))}
      <Btn>
        <div className="w-[23px] h-[2px] bg-white" />
      </Btn>
      {["1", "2", "3"].map((d) => (
        <Btn key={d} digit>
          {d}
        </Btn>
      ))}
      <Btn>
        <svg width="24" height="24" viewBox="0 0 24 24" stroke="#fff" strokeWidth="1.8">
          <path d="M12 0V24M0 12H24" />
        </svg>
      </Btn>
      <Btn digit className="!pt-0">
        <span className="text-[27px] leading-none">
          <sup className="text-[22px]">+</sup>/<sub className="text-[22px]">−</sub>
        </span>
      </Btn>
      <Btn digit>0</Btn>
      <Btn digit>
        <span className="mt-[4px]">.</span>
      </Btn>
      <Btn eq>
        <svg width="28" height="12" viewBox="0 0 28 12" stroke="#2a1a14" strokeWidth="1.6">
          <path d="M0 1.5H28M0 10H28" />
        </svg>
      </Btn>
    </div>
  </div>
);

export default function App() {
  return (
    <div className="w-[2132px] h-[1221px] relative overflow-hidden bg-[#a8a8a8] font-['Noto_Sans',sans-serif]">
      <div className="h-[1218px] rounded-b-[12px] bg-[#525252] flex flex-col overflow-hidden">
        <TitleBar />
        <TabRow />
        <Ribbon />
        <FormulaBar />
        <Sheet />
        <TabBar />
        <StatusBar />
      </div>
      <Calculator />
    </div>
  );
}
